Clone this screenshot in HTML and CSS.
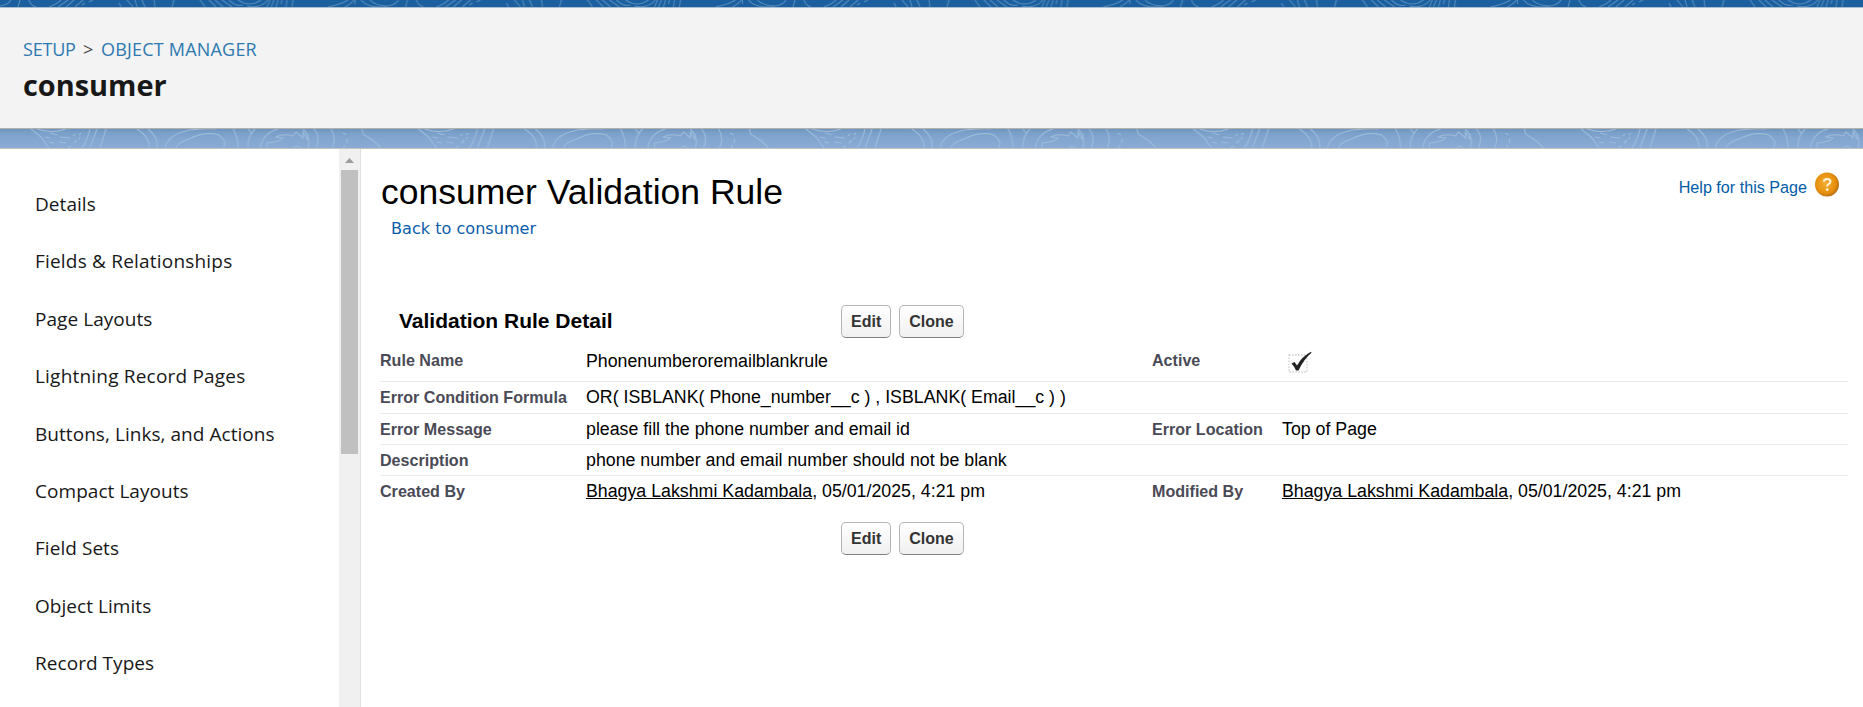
FILE: index.html
```
<!DOCTYPE html>
<html lang="en">
<head>
<meta charset="utf-8">
<title>consumer Validation Rule</title>
<link rel="stylesheet" href="styles.css">
</head>
<body>
<svg class="top-band" width="1863" height="7" aria-hidden="true">
  <defs>
    <pattern id="topo-top" x="0" y="0" width="387.5" height="7" patternUnits="userSpaceOnUse">
      <g fill="none" stroke="#5289bd" stroke-width="1.1">
        <path d="M0 6Q8 5 11 0M18 7L20 0M29 0Q30 5 36 7M49 7Q57 4 61 0M58 7L68 0M66 7L74 0M75 7L83 0M82 5L85 3M89 2L93 0M119 3L121 7M127 0L133 7M135 0L137 7M142 0L145 7M154 0L155 7M172 7L174 0M200 0L205 7M209 0L216 7M215 0L223 7M222 0L232 7M229 0Q236 7 243 5M238 0Q250 8 261 0M247 6Q260 9 268 0M267 7L270 0M271 7L274 0M276 7L278 0M281 4L282 0M286 7L287 0M292 7L293 0M328 7Q342 4 348 0M345 7Q352 3 354 0M355 0V4M361 0Q367 8 386 7Q396 5 397 0M370 0Q375 6 388 6"/>
      </g>
    </pattern>
  </defs>
  <rect width="1863" height="7" fill="#1b5f9e"/>
  <rect width="1863" height="7" fill="url(#topo-top)"/>
</svg>
<header class="page-header">
  <nav class="crumbs"><a>SETUP</a><span class="sep">&gt;</span><a class="crumb-last">OBJECT MANAGER</a></nav>
  <h1>consumer</h1>
</header>
<svg class="band" width="1863" height="19" aria-hidden="true">
  <defs>
    <linearGradient id="shade" x1="0" y1="0" x2="0" y2="1">
      <stop offset="0" stop-color="#6f94bd"/><stop offset=".2" stop-color="#7a9fc8"/><stop offset=".5" stop-color="#82a6cf"/><stop offset="1" stop-color="#89abd4"/>
    </linearGradient>
    <pattern id="topo" x="0" y="0" width="387.5" height="19" patternUnits="userSpaceOnUse">
      <g fill="none" stroke="#9dbbdc" stroke-width="1.1">
        <path d="M31 0L41 8L49 19M37 0Q52 5 66 0M50 4L57 6M60 8L70 9M45 8L50 9M49 13L54 14M59 13L66 14M68 19L71 17M73 7L75 5M79 6L81 4M74 14L77 11M79 10L80 8M82 19Q87 12 90 0M90 19L97 0M100 19L106 0M137 0Q150 8 149 19M148 0Q159 9 157 19M165 19Q168 5 190 1Q210-1 216 0M176 19Q177 14 189 10Q205 2 219 6Q228 13 223 19M233 0Q238 8 238 19M248 19Q247 8 255 0M248 0L252 5M260 19Q263 4 278 0M267 19V14Q280 13 283 9L276 8Q283 4 293 7L296 3L303 9V3L307 10L308 5M294 19Q297 15 300 19M303 0Q311 8 308 19M314 0Q321 8 316 19M331 0Q337 9 332 19M343 4L346 6M347 10V14M345 16L344 19M362 0L363 5L374 12L381 19"/>
      </g>
    </pattern>
  </defs>
  <rect width="1863" height="19" fill="url(#shade)"/>
  <rect width="1863" height="19" fill="url(#topo)"/>
</svg>
<div class="workspace">
  <aside class="sidebar">
    <ul class="menu">
      <li>Details</li>
      <li class="wide">Fields &amp; Relationships</li>
      <li>Page Layouts</li>
      <li class="wide">Lightning Record Pages</li>
      <li>Buttons, Links, and Actions</li>
      <li>Compact Layouts</li>
      <li>Field Sets</li>
      <li>Object Limits</li>
      <li>Record Types</li>
    </ul>
    <div class="scrollbar">
      <svg width="9" height="5"><path d="M0 5L4.5 0L9 5Z" fill="#9c9c9c"/></svg>
      <div class="thumb"></div>
    </div>
  </aside>
  <main class="content">
    <div class="title-row">
      <div>
        <h2>consumer Validation Rule</h2>
        <a class="back">Back to consumer</a>
      </div>
      <a class="help">Help for this Page
        <svg width="25" height="25" viewBox="0 0 25 25">
          <defs><radialGradient id="orb" cx=".45" cy=".45" r=".6"><stop offset="0" stop-color="#f5ae33"/><stop offset=".7" stop-color="#e68f0c"/><stop offset="1" stop-color="#a9651a"/></radialGradient></defs>
          <circle cx="12" cy="12.5" r="12" fill="url(#orb)"/>
          <path d="M8.8 9.6Q9 7 12.2 7Q15.4 7 15.4 9.6Q15.4 11.2 13.6 12.2Q12.2 13 12.2 14.6" fill="none" stroke="#fff3d8" stroke-width="2.1"/>
          <circle cx="12.2" cy="17.6" r="1.4" fill="#fff3d8"/>
        </svg>
      </a>
    </div>
    <div class="section-head">
      <h3>Validation Rule Detail</h3>
      <div class="actions"><button>Edit</button><button>Clone</button></div>
    </div>
    <dl class="details">
      <div class="row first"><dt>Rule Name</dt><dd>Phonenumberoremailblankrule</dd><dt>Active</dt><dd>
        <svg class="check" width="26" height="24" viewBox="0 0 26 24"><rect x="2" y="4" width="18" height="17" fill="none" stroke="#cfcfcf" stroke-width="1.3" stroke-dasharray="1.6 1.4"/><path d="M4.5 12.5L7.5 11L10 14.5Q15 5.5 24 0.8L24.5 1.8Q17 8 11.5 19.5H9Q7 15 4.5 12.5Z" fill="#222"/></svg></dd></div>
      <div class="row tall"><dt>Error Condition Formula</dt><dd>OR( ISBLANK( Phone_number__c ) , ISBLANK( Email__c ) )</dd></div>
      <div class="row"><dt>Error Message</dt><dd>please fill the phone number and email id</dd><dt>Error Location</dt><dd>Top of Page</dd></div>
      <div class="row"><dt>Description</dt><dd>phone number and email number should not be blank</dd></div>
      <div class="row last"><dt>Created By</dt><dd><a>Bhagya Lakshmi Kadambala</a>, 05/01/2025, 4:21 pm</dd><dt>Modified By</dt><dd><a>Bhagya Lakshmi Kadambala</a>, 05/01/2025, 4:21 pm</dd></div>
    </dl>
    <div class="actions foot"><button>Edit</button><button>Clone</button></div>
  </main>
</div>
</body>
</html>
```
FILE: styles.css
```
* { box-sizing: border-box; }
body {
  margin: 0;
  height: 707px;
  overflow: hidden;
  display: flex;
  flex-direction: column;
  background: #fff;
  font-family: "Liberation Sans", Arial, sans-serif;
  color: #000;
}
h1, h2, h3, ul, dl, dt, dd { margin: 0; padding: 0; }
.top-band, .band { display: block; flex: none; }
.page-header {
  flex: none;
  height: 122px;
  padding: 28px 0 0 23px;
  background: #f3f3f3;
  border-top: 1px solid #a9bdd2;
  border-bottom: 1px solid #b3b0ae;
  font-family: "Open Sans", sans-serif;
}
.crumbs {
  display: flex;
  height: 26px;
  line-height: 26px;
  font-size: 18px;
  color: #2d79b0;
}
.crumbs a { width: 60px; letter-spacing: -.2px; }
.crumbs .sep { width: 18px; color: #444; font-size: 18px; }
.crumbs .crumb-last { width: auto; letter-spacing: .2px; }
h1 {
  padding-top: 3px;
  line-height: 40px;
  font-size: 28.9px;
  color: #181818;
}
.workspace {
  flex: 1;
  display: flex;
  min-height: 0;
  border-top: 1px solid #c4c1c0;
}
.sidebar {
  width: 361px;
  display: flex;
  justify-content: space-between;
  border-right: 1px solid #dfdfdf;
}
.menu {
  list-style: none;
  padding: 27px 0 0 35px;
  font: 19px "Open Sans", sans-serif;
  color: #181818;
}
.menu li { height: 57.4px; line-height: 57.4px; letter-spacing: .05px; white-space: nowrap; }
.menu .wide { letter-spacing: .2px; }
.scrollbar {
  width: 21px;
  padding-top: 9px;
  display: flex;
  flex-direction: column;
  align-items: center;
  gap: 7px;
  background: #f0f0f0;
}
.thumb { width: 17px; height: 284px; background: #c0c0c0; }
.content { flex: 1; padding: 22px 15px 0 19px; }
.title-row { display: flex; justify-content: space-between; height: 134px; }
h2 { font-size: 35.5px; line-height: 42px; font-weight: 400; padding-left: 1px; }
.back {
  display: block;
  padding: 5px 0 0 11px;
  font: 16.1px/22px "DejaVu Sans", sans-serif;
  color: #0b5cab;
}
.help {
  display: flex;
  gap: 8px;
  height: 25px;
  padding: 1px 8px 0 0;
  line-height: 31px;
  font-size: 16.15px;
  color: #015ba7;
}
.help svg { flex: none; }
.section-head { display: flex; height: 40px; }
h3 { width: 461px; padding-left: 19px; font-size: 21px; line-height: 32px; }
.actions { display: flex; gap: 8px; height: 33px; }
button {
  height: 33px;
  padding: 0 9px;
  border: 1px solid #b5b5b5;
  border-bottom-color: #7f7f7f;
  border-radius: 5px;
  background: linear-gradient(#fff, #f0f0f0);
  font: bold 16px "Liberation Sans", Arial, sans-serif;
  color: #333;
}
.row {
  display: grid;
  grid-template-columns: 206px 566px 130px 1fr;
  height: 31px;
  padding-top: 4px;
  border-bottom: 1px solid #ebebeb;
  line-height: 22px;
  font-size: 17.77px;
  white-space: nowrap;
}
.row.first { height: 37px; padding-top: 5px; }
.row.first dt { line-height: 21px; }
.row.tall { height: 32px; }
.row.last { height: 46px; border-bottom: 0; }
dt { font-size: 16.1px; font-weight: 700; color: #4a4a56; }
dd a { text-decoration: underline; }
.check { display: block; margin: 1px 0 0 5px; }
.foot { padding-left: 461px; }
```
